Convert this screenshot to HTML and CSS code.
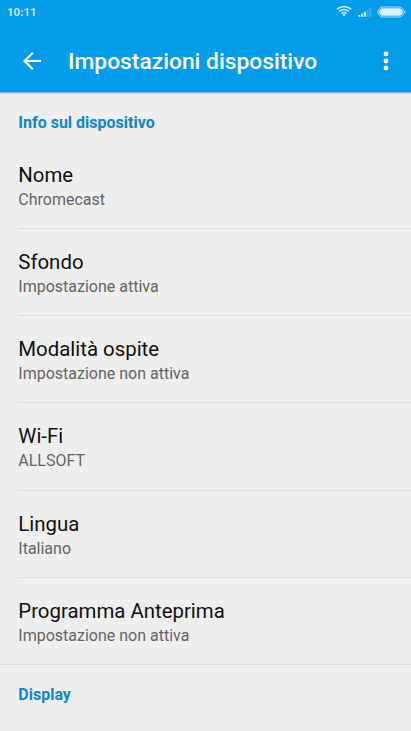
FILE: index.html
```html
<!DOCTYPE html>
<html lang="it">
<head>
<meta charset="utf-8">
<title>Impostazioni dispositivo</title>
<link rel="stylesheet" href="styles.css">
</head>
<body>
<header class="top">
  <div class="status">
    <span class="clock">10:11</span>
    <svg class="status-icons" width="70" height="18" viewBox="0 0 70 18">
      <g fill="none" stroke="#d7effc" stroke-width="1.5">
        <path d="M.9 8.2Q8 2.6 15.1 8.2M3.2 10.4Q8 6.8 12.8 10.4M5.3 12.5Q8 10.6 10.7 12.5"/>
      </g>
      <path d="M6.3 13.6Q8 12.6 9.7 13.6L8 15.4Z" fill="#d7effc"/>
      <path d="M22.3 14h2v1.7h-2zM25 12.6h2v3.1h-2zM27.7 10.8h2.2v4.9h-2.2z" fill="#d7effc"/>
      <path d="M30.7 9h1.9v6.7h-1.9zM33.4 7h1.9v8.7h-1.9z" fill="#45b2ed"/>
      <rect x="42" y="6" width="26" height="10" rx="5" fill="none" stroke="#a8daf6"/>
      <rect x="43.3" y="7.3" width="23.4" height="7.4" rx="3.7" fill="#d7effc"/>
      <path d="M69 9.5v3" stroke="#a8daf6"/>
    </svg>
  </div>
  <div class="bar">
    <svg class="back" width="20" height="20" viewBox="0 0 20 20" fill="none" stroke="#fff" stroke-width="2.2">
      <path d="M19 10H2.8M10.8 1.8 2.6 10l8.2 8.2"/>
    </svg>
    <h1 class="title">Impostazioni dispositivo</h1>
    <svg class="more" width="6" height="20" viewBox="0 0 6 20" fill="#fff">
      <circle cx="3" cy="3" r="2.4"/><circle cx="3" cy="10" r="2.4"/><circle cx="3" cy="17" r="2.4"/>
    </svg>
  </div>
</header>
<main>
  <h2 class="section">Info sul dispositivo</h2>
  <ul class="list">
    <li class="row"><span class="name">Nome</span><span class="value">Chromecast</span></li>
    <li class="row"><span class="name">Sfondo</span><span class="value">Impostazione attiva</span></li>
    <li class="row"><span class="name">Modalità ospite</span><span class="value">Impostazione non attiva</span></li>
    <li class="row"><span class="name">Wi-Fi</span><span class="value">ALLSOFT</span></li>
    <li class="row"><span class="name">Lingua</span><span class="value">Italiano</span></li>
    <li class="row"><span class="name">Programma Anteprima</span><span class="value">Impostazione non attiva</span></li>
  </ul>
  <h2 class="section">Display</h2>
</main>
</body>
</html>
```
FILE: styles.css
```css
* { box-sizing: border-box; }
body {
  margin: 0;
  height: 731px;
  overflow: hidden;
  background: #eee;
  font-family: Roboto, "Liberation Sans", sans-serif;
}
h1, h2, ul { margin: 0; padding: 0; }
.top {
  height: 93px;
  background: #049be8;
  border-bottom: 1px solid #7fb5de;
  box-shadow: 0 1px 1px #d2d4d6;
}
.status {
  height: 24px;
  display: flex;
  justify-content: space-between;
  padding: 0 5px 0 7px;
}
.clock {
  font-size: 11.5px;
  font-weight: 700;
  line-height: 24px;
  color: #c5e8fb;
}
.status-icons { margin-top: 1px; }
.bar {
  height: 73px;
  display: flex;
  align-items: center;
  padding: 0 22px;
}
.back { flex: none; }
.title {
  flex: 1;
  margin-left: 26px;
  padding-top: 2px;
  font-size: 22.8px;
  font-weight: 500;
  line-height: 30px;
  color: #fff;
  white-space: nowrap;
}
.section {
  height: 48.8px;
  padding: 20px 18.3px 0;
  font-size: 16px;
  font-weight: 700;
  line-height: 20px;
  color: #1484c8;
}
.list { list-style: none; }
.row {
  height: 87.2px;
  margin-left: 18px;
  padding-top: 20px;
  padding-left: 0.3px;
  display: flex;
  flex-direction: column;
  border-bottom: 1px solid #dcdcdc;
  white-space: nowrap;
}
.row:last-child { margin-left: 0; padding-left: 18.3px; }
.name { font-size: 20.4px; line-height: 26px; color: #111; }
.value { font-size: 16px; line-height: 23px; color: #666; }
```
